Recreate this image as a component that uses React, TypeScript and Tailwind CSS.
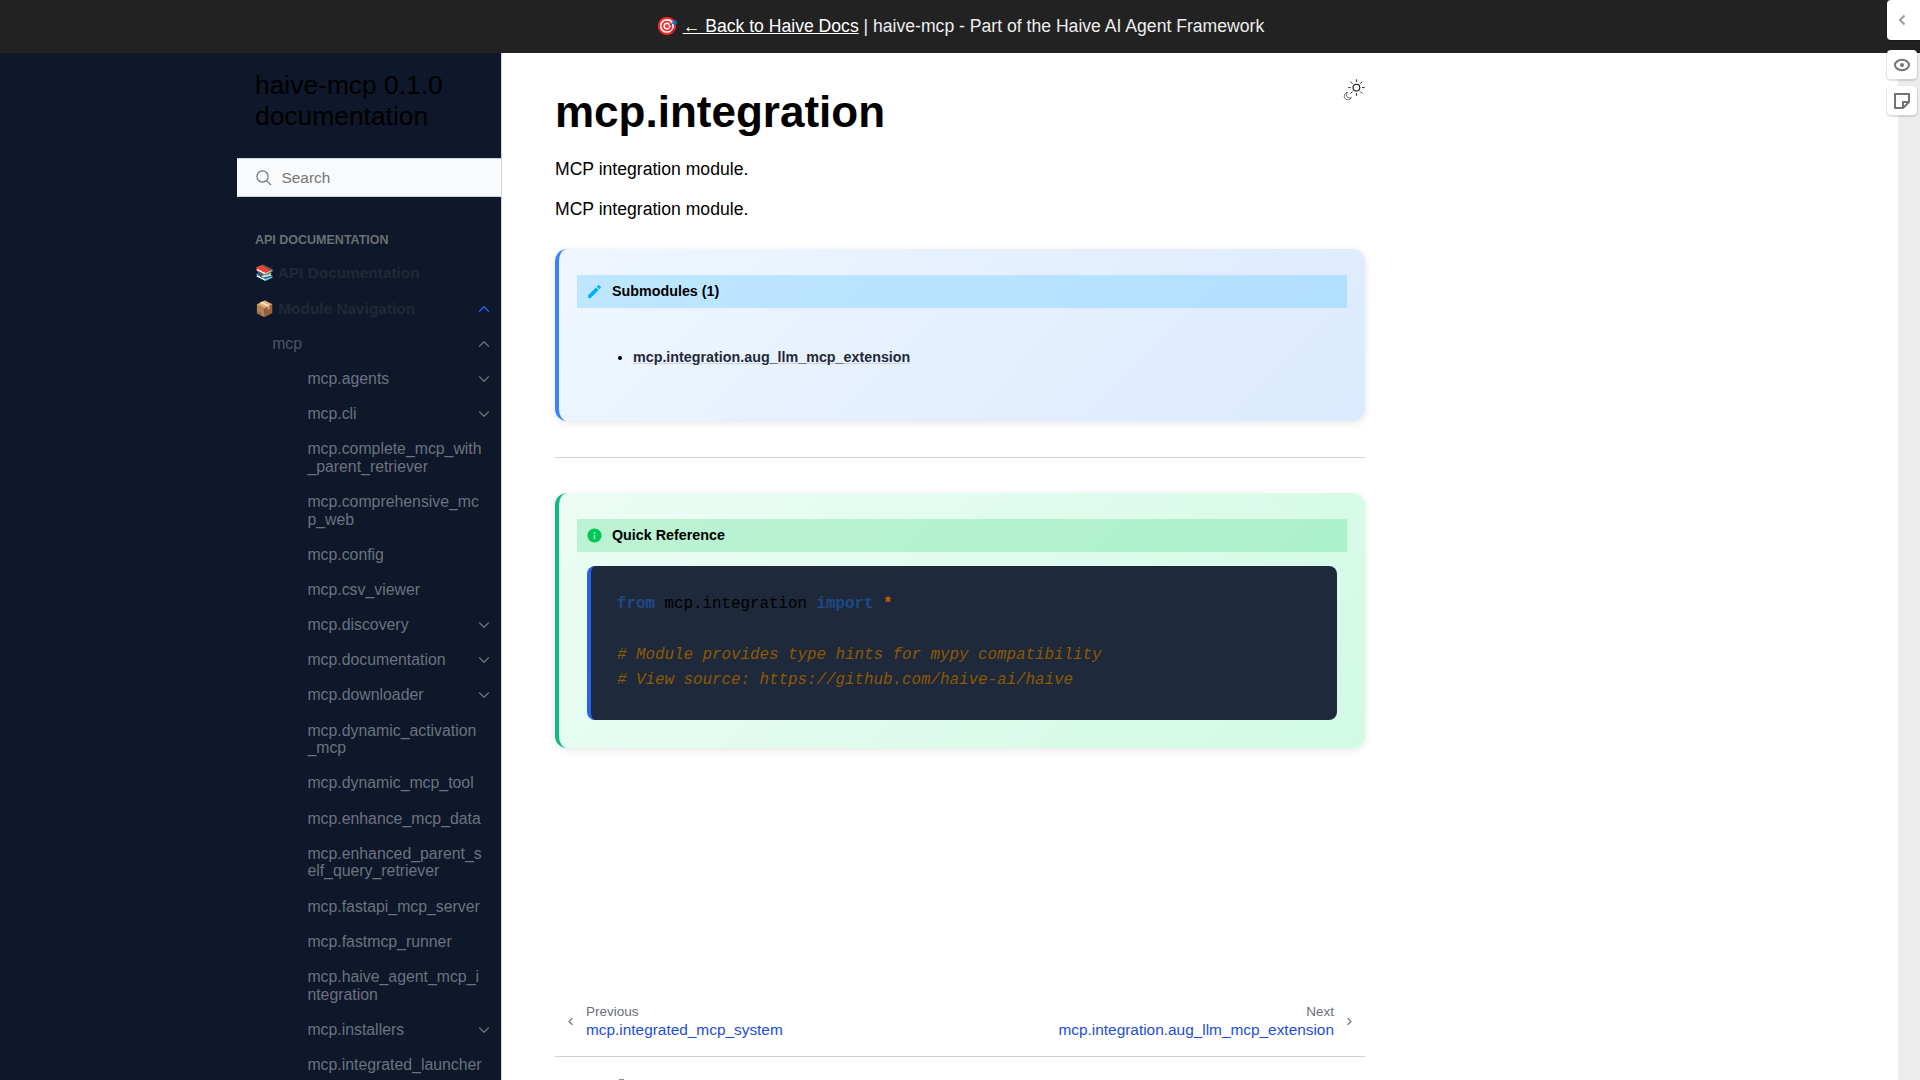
import React from "react";

type NavItem = { lines: string[]; expandable?: boolean };

const items: NavItem[] = [
  { lines: ["mcp.agents"], expandable: true },
  { lines: ["mcp.cli"], expandable: true },
  { lines: ["mcp.complete_mcp_with", "_parent_retriever"] },
  { lines: ["mcp.comprehensive_mc", "p_web"] },
  { lines: ["mcp.config"] },
  { lines: ["mcp.csv_viewer"] },
  { lines: ["mcp.discovery"], expandable: true },
  { lines: ["mcp.documentation"], expandable: true },
  { lines: ["mcp.downloader"], expandable: true },
  { lines: ["mcp.dynamic_activation", "_mcp"] },
  { lines: ["mcp.dynamic_mcp_tool"] },
  { lines: ["mcp.enhance_mcp_data"] },
  { lines: ["mcp.enhanced_parent_s", "elf_query_retriever"] },
  { lines: ["mcp.fastapi_mcp_server"] },
  { lines: ["mcp.fastmcp_runner"] },
  { lines: ["mcp.haive_agent_mcp_i", "ntegration"] },
  { lines: ["mcp.installers"], expandable: true },
  { lines: ["mcp.integrated_launcher"] },
];

function Chevron({ up = false, className = "" }: { up?: boolean; className?: string }) {
  return (
    <svg
      viewBox="0 0 24 24"
      className={`h-[18px] w-[18px] shrink-0 ${className}`}
      fill="none"
      stroke="currentColor"
      strokeWidth="1.7"
      strokeLinecap="round"
      strokeLinejoin="round"
    >
      <path d={up ? "M6 15l6-6 6 6" : "M6 9l6 6 6-6"} />
    </svg>
  );
}

function SearchIcon() {
  return (
    <svg viewBox="0 0 24 24" className="h-[18px] w-[18px] text-[#6b6f76]" fill="none" stroke="currentColor" strokeWidth="1.5" strokeLinecap="round">
      <circle cx="10" cy="10" r="7.5" />
      <path d="M21 21l-5.6-5.6" />
    </svg>
  );
}

function ThemeIcon() {
  return (
    <svg viewBox="0 0 22 22" className="h-[22px] w-[22px]" fill="none" stroke="#111" strokeLinecap="round" strokeLinejoin="round">
      <circle cx="13.4" cy="8.6" r="3.4" strokeWidth="1.1" />
      <path
        strokeWidth="0.9"
        d="M13.4 0.7v1.900M13.4 14.6v1.900M5.500 8.6h1.900M19.400 8.6h1.900M7.800 3l1.400 1.400M17.600 12.800l1.400 1.400M19 3l-1.400 1.400M9.200 12.800L7.800 14.200"
      />
      <path strokeWidth="0.6" d="M4.100 13.500a3.700 3.700 0 1 0 4.200 5 3.300 3.300 0 0 1-4.200-5z" />
    </svg>
  );
}

function Sidebar() {
  return (
    <aside className="h-[1027px] w-[502px] shrink-0 overflow-hidden border-r border-[#cbd5e1] bg-[#0f172a] pl-[237px]">
      <div className="h-[105px] pt-[17px] pl-[18px] text-[26.4px] leading-[31px] text-black">
        haive-mcp 0.1.0
        <br />
        documentation
      </div>
      <div className="flex h-[39px] items-center gap-[8.5px] border-y border-[#cbd5e1] bg-[#f8fafc] pl-[18px]">
        <SearchIcon />
        <span className="text-[15.4px] text-[#757575]">Search</span>
      </div>
      <div className="mt-[36px] pl-[18px] text-[12.5px] leading-[14px] font-bold text-[#6b6f76]">API DOCUMENTATION</div>
      <nav className="mt-[8px] text-[15.4px] leading-[18px]">
        <div className="flex h-[36px] items-center pl-[18px] font-bold text-[#1f2937]">📚 API Documentation</div>
        <div className="flex h-[36px] items-center justify-between pr-[8px] pl-[18px] font-bold text-[#1f2937]">
          <span>📦 Module Navigation</span>
          <Chevron up className="text-[#2563eb]" />
        </div>
        <div className="flex h-[34.2px] items-center justify-between pr-[8px] pl-[35.2px] text-[15.84px] text-[#4b5563]">
          <span>mcp</span>
          <Chevron up className="text-[#6b6f76]" />
        </div>
        {items.map((item) => (
          <div
            key={item.lines[0]}
            className="flex items-center justify-between py-[8.73px] pr-[8px] pl-[70.4px] text-[15.84px] leading-[17.71px] text-[#6b7280]"
          >
            <span className="whitespace-nowrap">
              {item.lines.map((line) => (
                <span key={line} className="block">
                  {line}
                </span>
              ))}
            </span>
            {item.expandable && <Chevron className="-my-1 text-[#6b6f76]" />}
          </div>
        ))}
      </nav>
    </aside>
  );
}

function Content() {
  return (
    <main className="h-[1027px] w-[810px] overflow-visible">
      <div className="flex items-start justify-between">
        <h1 className="pt-[31px] text-[44px] leading-[55px] font-bold text-black">mcp.integration</h1>
        <div className="mt-[26px]">
          <ThemeIcon />
        </div>
      </div>
      <p className="mt-[17px] text-[17.6px] leading-[27px]">MCP integration module.</p>
      <p className="mt-[13px] text-[17.6px] leading-[27px]">MCP integration module.</p>

      <section className="mt-[26px] h-[172px] rounded-[12px] border-l-4 border-[#3b82f6] bg-linear-[135deg,#eff6ff_0%,#dbeafe_100%] px-[18px] pt-[26px] shadow-[0_2px_8px_rgba(0,0,0,0.1)]">
        <div className="flex h-[33px] items-center bg-[#00b0ff]/20 pl-[9px] text-[14.3px] font-bold">
          <svg viewBox="0 0 24 24" className="mr-[9px] h-[17px] w-[17px]" fill="#00b0ff">
            <path d="M20.71 7.04c.39-.39.39-1.04 0-1.41l-2.34-2.34c-.37-.39-1.02-.39-1.41 0l-1.84 1.83 3.75 3.75M3 17.25V21h3.75L17.81 9.93l-3.75-3.75L3 17.25z" />
          </svg>
          Submodules (1)
        </div>
        <div className="mt-[38px] flex items-center pl-[41px] text-[14.3px] leading-[22px] font-bold text-[#1f2937]">
          <span className="mt-[2px] mr-[11px] h-[4px] w-[4px] rounded-full bg-black" />
          <span className="underline decoration-[#cbd5e1] decoration-1 underline-offset-auto">mcp.integration.aug_llm_mcp_extension</span>
        </div>
      </section>

      <div className="mt-[36px] mb-[35px] h-px bg-[#c8d3de]" />

      <section className="h-[255px] rounded-[12px] border-l-4 border-[#10b981] bg-linear-[135deg,#ecfdf5_0%,#d1fae5_100%] px-[18px] pt-[26px] shadow-[0_2px_8px_rgba(0,0,0,0.1)]">
        <div className="flex h-[33px] items-center bg-[#00c852]/20 pl-[9px] text-[14.3px] font-bold">
          <svg viewBox="0 0 24 24" className="mr-[9px] h-[17px] w-[17px]" fill="#00c852">
            <path d="M13 9h-2V7h2m0 10h-2v-6h2m-1-9A10 10 0 0 0 2 12a10 10 0 0 0 10 10 10 10 0 0 0 10-10A10 10 0 0 0 12 2z" />
          </svg>
          Quick Reference
        </div>
        <pre className="mx-[10px] mt-[14px] h-[154px] rounded-[8px] border-l-4 border-[#2563eb] bg-[#1e293b] pt-[26px] pl-[26px] font-['Liberation_Mono',monospace] text-[15.84px] leading-[25.34px] text-black">
          <span className="font-bold text-[#204a87]">from</span> mcp.integration <span className="font-bold text-[#204a87]">import</span>{" "}
          <span className="font-bold text-[#ce5c00]">*</span>
          {"\n\n"}
          <span className="text-[#8f5902] italic">{"# Module provides type hints for mypy compatibility\n# View source: https://github.com/haive-ai/haive"}</span>
        </pre>
      </section>

      <div className="mt-[255px] flex items-center justify-between px-[11px]">
        <div className="flex items-center">
          <svg viewBox="0 0 12 12" className="mr-[11px] h-[9px] w-[9px]" fill="none" stroke="#6b6f76" strokeWidth="1.6">
            <path d="M8.5 1.5L4 6l4.500 4.500" />
          </svg>
          <div>
            <div className="text-[13.5px] leading-[18px] text-[#6b6f76]">Previous</div>
            <div className="text-[15.4px] leading-[18px] text-[#1d4ed8]">mcp.integrated_mcp_system</div>
          </div>
        </div>
        <div className="flex items-center text-right">
          <div>
            <div className="text-[13.5px] leading-[18px] text-[#6b6f76]">Next</div>
            <div className="text-[15.4px] leading-[18px] text-[#1d4ed8]">mcp.integration.aug_llm_mcp_extension</div>
          </div>
          <svg viewBox="0 0 12 12" className="ml-[11px] h-[9px] w-[9px]" fill="none" stroke="#6b6f76" strokeWidth="1.6">
            <path d="M3.500 1.500L8 6l-4.500 4.500" />
          </svg>
        </div>
      </div>
      <div className="mt-[17px] h-px bg-[#c8d3de]" />
      <div className="mt-[22px] ml-[64px] h-px w-[5px] bg-[#909090]" />
    </main>
  );
}

export default function App() {
  return (
    <div className="relative h-[1080px] w-[1920px] overflow-hidden bg-white font-['Liberation_Sans',Arial,sans-serif] text-black">
      <header className="flex h-[53px] items-center justify-center bg-[#222] text-[17.6px] whitespace-pre text-[#eee]">
        🎯 <a className="text-white underline">← Back to Haive Docs</a> | haive-mcp - Part of the Haive AI Agent Framework
      </header>
      <div className="flex">
        <Sidebar />
        <div className="w-[53px] shrink-0" />
        <Content />
        <div className="ml-auto w-[22px] bg-[#ececec]" />
      </div>
      <div className="absolute top-0 right-0 flex flex-col">
        <div className="flex h-[40px] w-[33px] items-center justify-center rounded-l-[4px] bg-white pr-[3px] shadow-[0_1px_2px_rgba(0,0,0,0.3)]">
          <svg viewBox="0 0 16 16" className="h-[16px] w-[16px]" fill="none" stroke="#9a9a9a" strokeWidth="2">
            <path d="M10.500 3.500L6 8l4.500 4.500" />
          </svg>
        </div>
        <div className="mt-[10px] flex h-[29px] w-[30px] items-center justify-center rounded-[4px] bg-white shadow-[0_1px_1px_1px_rgba(0,0,0,0.12)]">
          <svg viewBox="0 0 16 16" className="h-[16px] w-[16px]" fill="none" stroke="#737373" strokeWidth="2">
            <ellipse cx="8" cy="8" rx="7" ry="5.2" />
            <circle cx="8" cy="8" r="2" fill="#737373" stroke="none" />
          </svg>
        </div>
        <div className="mt-[7px] flex h-[29px] w-[30px] items-center justify-center rounded-[4px] bg-white shadow-[0_1px_1px_1px_rgba(0,0,0,0.12)]">
          <svg viewBox="0 0 16 16" className="h-[16px] w-[16px]" fill="none" stroke="#737373" strokeWidth="2" strokeLinejoin="round">
            <path d="M15 9V1H1v14h8zM9 14.500V9h5.500" />
          </svg>
        </div>
      </div>
    </div>
  );
}
